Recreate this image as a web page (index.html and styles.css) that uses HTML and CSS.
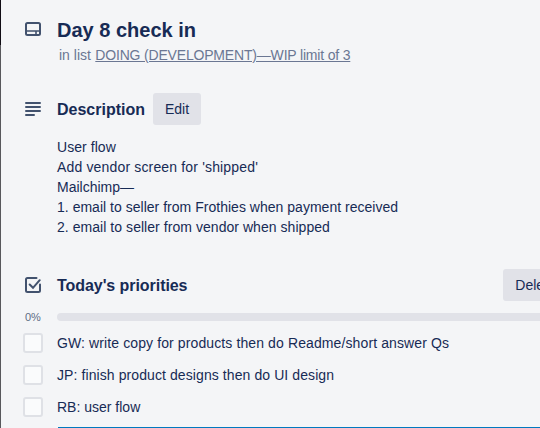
FILE: index.html
```html
<!DOCTYPE html>
<html lang="en">
<head>
<meta charset="utf-8">
<title>Day 8 check in</title>
<link rel="stylesheet" href="styles.css">
</head>
<body>
<main class="card">
  <header class="row header">
    <svg class="icon" viewBox="0 0 16 16"><rect x="1" y="1" width="14" height="12" rx="1.5" fill="none" stroke="currentColor" stroke-width="2"/><path d="M1 9H15M11 9V13" fill="none" stroke="currentColor" stroke-width="1.6"/></svg>
    <div>
      <h1 class="title">Day 8 check in</h1>
      <p class="location">in list <a class="list-link">DOING (DEVELOPMENT)—WIP limit of 3</a></p>
    </div>
  </header>
  <section class="description">
    <div class="row section-head">
      <svg class="icon" viewBox="0 0 16 16"><path d="M1 2H15M1 6H15M1 10H15M1 14H9" stroke="currentColor" stroke-width="2" stroke-linecap="round"/></svg>
      <h2 class="heading heading-description">Description</h2>
      <button class="button edit">Edit</button>
    </div>
    <div class="copy">
      <p class="l1">User flow</p>
      <p class="l2">Add vendor screen for 'shipped'</p>
      <p class="l3">Mailchimp—</p>
      <p class="l4">1. email to seller from Frothies when payment received</p>
      <p class="l5">2. email to seller from vendor when shipped</p>
    </div>
  </section>
  <section class="checklist">
    <div class="row section-head">
      <svg class="icon" viewBox="0 0 16 16"><path d="M11.5 1H2.5Q1 1 1 2.5V13.500Q1 15 2.500 15H13.500Q15 15 15 13.500V7.500" fill="none" stroke="currentColor" stroke-width="2" stroke-linecap="round"/><path d="M4.700 7.500L8 10.800L14.700 3.200" fill="none" stroke="currentColor" stroke-width="2" stroke-linecap="round"/></svg>
      <h2 class="heading heading-checklist">Today's priorities</h2>
      <button class="button delete">Delete</button>
    </div>
    <div class="progress"><span class="percent">0%</span><div class="track"></div></div>
    <ul class="items">
      <li><span class="box"></span><span class="i1">GW: write copy for products then do Readme/short answer Qs</span></li>
      <li><span class="box"></span><span class="i2">JP: finish product designs then do UI design</span></li>
      <li><span class="box"></span><span class="i3">RB: user flow</span></li>
    </ul>
    <div class="editor"></div>
  </section>
</main>
</body>
</html>
```
FILE: styles.css
```css
* { box-sizing: border-box; }
body {
  margin: 0;
  height: 428px;
  overflow: hidden;
  padding-left: 1px;
  background: linear-gradient(#100c14 45px, #58585c 45px);
  color: #172b55;
  font: 14px/20px "Liberation Sans", Arial, sans-serif;
}
h1, h2, p, ul { margin: 0; padding: 0; }
.card {
  height: 428px;
  padding: 18px 0 0 24px;
  background: #f4f5f7;
  white-space: nowrap;
  overflow: hidden;
}
.row { display: flex; }
.icon { width: 16px; height: 16px; flex: none; margin-right: 16px; color: #42526e; }
.header { height: 75px; }
.header .icon { margin-top: 4px; }
.title { font-size: 20px; line-height: 24px; }
.location { margin: 3px 0 0 2px; color: #6b7793; }
.list-link { margin-left: 0.5px; letter-spacing: -0.18px; text-decoration: underline; }
.section-head { height: 32px; align-items: center; }
.heading { padding-top: 2px; font-size: 16px; line-height: 20px; }
.button {
  flex: none;
  height: 32px;
  padding: 0 12px;
  border: 0;
  border-radius: 3px;
  background: #e1e2e8;
  color: #172b55;
  font: inherit;
}
.edit { width: 48px; margin-left: 8px; }
.heading-description { width: 88px; }
.heading-checklist { letter-spacing: -0.06px; }
.delete { width: 65px; margin-left: auto; margin-right: -28px; }
.copy { padding: 12px 0 0 32px; }
.l1 { letter-spacing: 0.05px; }
.l2 { letter-spacing: 0.16px; }
.l4 { letter-spacing: 0.02px; }
.l5 { letter-spacing: 0.05px; }
.i1 { letter-spacing: 0.11px; }
.i2 { letter-spacing: 0.09px; }
.checklist { margin-top: 32px; }
.progress { display: flex; align-items: center; height: 20px; margin-top: 6px; }
.percent { width: 32px; font-size: 11px; color: #5e6c84; }
.track { flex: 1; height: 8px; border-radius: 4px 0 0 4px; background: #e1e2e8; }
.items { list-style: none; }
.items li { display: flex; align-items: center; height: 32px; }
.box {
  width: 20px;
  height: 20px;
  margin: 0 14px 0 -2px;
  border: 2px solid #dfe1e6;
  border-radius: 3px;
  background: #fafbfc;
}
.editor { height: 1px; margin: 4px 0 0 33px; background: #0079bf; }
```
